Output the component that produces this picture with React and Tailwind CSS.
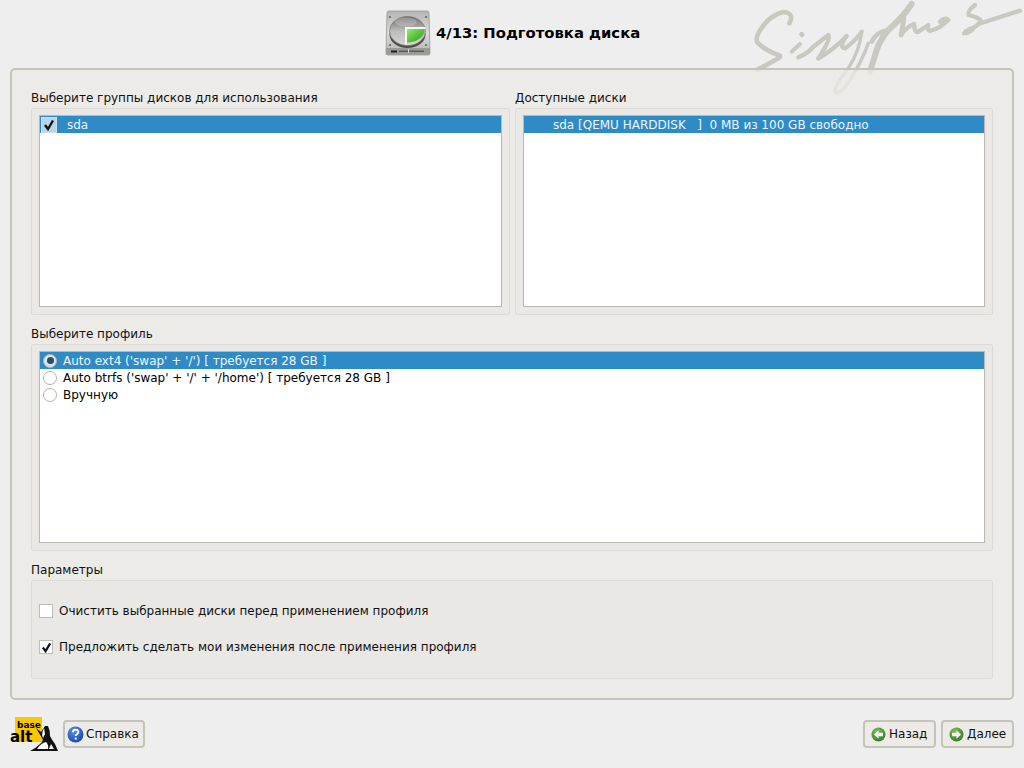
const FONT = { fontFamily: '"DejaVu Sans", sans-serif' };

function DiskIcon() {
  return (
    <svg width="54" height="54" viewBox="0 0 54 54" className="shrink-0">
      <defs>
        <linearGradient id="body" x1="0" y1="0" x2="0" y2="1">
          <stop offset="0" stopColor="#b4b4b2" />
          <stop offset="0.5" stopColor="#dadad8" />
          <stop offset="1" stopColor="#b2b2b0" />
        </linearGradient>
        <linearGradient id="platter" x1="0" y1="0" x2="0" y2="1">
          <stop offset="0" stopColor="#6c6c6e" />
          <stop offset="0.5" stopColor="#bcbcba" />
          <stop offset="1" stopColor="#d6d6d4" />
        </linearGradient>
        <linearGradient id="wedge" x1="0" y1="0" x2="1" y2="1">
          <stop offset="0" stopColor="#8cf066" />
          <stop offset="1" stopColor="#279518" />
        </linearGradient>
      </defs>
      <path d="M7 7 Q7 5 9 5 H47 Q49 5 49 7 L50 47 Q50 49 48 49 H8 Q6 49 6 47 Z" fill="url(#body)" stroke="#8c8c8a" strokeWidth="0.700" />
      <rect x="6" y="42" width="44" height="6.500" rx="1" fill="#9a9a98" />
      <rect x="11" y="44.500" width="6" height="2" fill="#202020" />
      <rect x="19" y="44.500" width="25" height="1.500" fill="#5b5b59" />
      <rect x="28" y="43" width="1" height="4" fill="#d8d8d6" />
      <ellipse cx="27.500" cy="28.500" rx="18" ry="13.500" fill="#4f4f4d" />
      <ellipse cx="27.500" cy="25" rx="18" ry="14.500" fill="url(#platter)" stroke="#737371" strokeWidth="0.600" />
      <ellipse cx="26" cy="16" rx="11" ry="4.500" fill="#e4e4e2" opacity="0.300" />
      <path d="M25 21 H45.500 V23 H27 V38.500 H25 Z" fill="#f6f6f4" />
      <path d="M27 23 H44.500 A17.500 13 0 0 1 27 36.500 Z" fill="url(#wedge)" />
      <circle cx="10" cy="11" r="1" fill="#5f5f5d" />
      <circle cx="46" cy="11" r="1" fill="#5f5f5d" />
      <circle cx="10" cy="39" r="1" fill="#5f5f5d" />
      <circle cx="46" cy="39" r="1" fill="#5f5f5d" />
    </svg>
  );
}

function Signature() {
  return (
    <svg
      width="284"
      height="100"
      viewBox="0 0 852 300"
      className="absolute right-0 top-0"
      fill="none"
      stroke="#c9c9c1"
      strokeLinecap="round"
      strokeLinejoin="round"
    >
      <path d="M148 70 Q165 40 130 36 Q90 45 62 88 Q42 120 55 130 Q75 150 115 165 Q128 168 110 178 Q80 195 50 210" strokeWidth="14" />
      <path d="M155 155 L180 132" strokeWidth="12" />
      <path d="M175 172 Q205 160 220 140 L265 105 Q275 115 235 175" strokeWidth="13" />
      <path d="M185 103 L186 104" strokeWidth="15" />
      <path d="M235 175 Q280 150 320 108 Q295 140 315 145 Q345 125 365 95" strokeWidth="13" />
      <path d="M365 95 Q360 150 325 205 Q280 262 286 276 Q300 285 330 240 Q365 185 385 130" strokeWidth="10" />
      <path d="M515 12 Q490 50 445 90 Q420 120 410 150 L390 215" strokeWidth="18" />
      <path d="M395 125 Q410 95 445 90" strokeWidth="14" />
      <path d="M492 55 L483 105" strokeWidth="14" />
      <path d="M483 105 Q500 80 522 72 Q524 100 535 95 Q550 85 565 75 Q560 95 572 92 Q600 85 625 60 Q615 50 600 65" strokeWidth="13" />
      <path d="M705 15 Q680 35 686 45 Q725 55 722 65 Q700 88 672 100" strokeWidth="13" />
      <path d="M680 96 L694 88" strokeWidth="19" />
      <path d="M715 72 L840 32" strokeWidth="13" />
    </svg>
  );
}

function CheckMark({ className }) {
  return (
    <svg viewBox="0 0 12 12" className={className} fill="none" stroke="#10151a" strokeWidth="2.400">
      <path d="M2 6 L5 10 L10 1.500" />
    </svg>
  );
}

function Radio({ checked }) {
  return (
    <span className={`flex h-[14px] w-[14px] shrink-0 items-center justify-center rounded-full border border-[#b4b4ac] ${checked ? "bg-[#d5e5ef]" : "bg-white"}`}>
      {checked && <span className="h-[7px] w-[7px] rounded-full bg-[#33495c]" />}
    </span>
  );
}

function ProfileRow({ selected, checked, children }) {
  return (
    <div className={`flex h-[17px] items-center gap-[6px] pl-[3px] text-[12px] whitespace-pre ${selected ? "bg-[#2e8bc6] text-[#eef5fa]" : "text-black"}`}>
      <Radio checked={checked} />
      {children}
    </div>
  );
}

function Option({ checked, children }) {
  return (
    <div className="flex h-[14px] items-center gap-[6px] text-[12px] text-[#111]">
      <span className="flex h-[14px] w-[14px] shrink-0 items-center justify-center border border-[#bdbdb6] bg-white">
        {checked && <CheckMark className="h-[11px] w-[11px]" />}
      </span>
      {children}
    </div>
  );
}

function ArrowIcon({ dir }) {
  return (
    <svg width="15" height="15" viewBox="0 0 15 15" className="shrink-0">
      <defs>
        <radialGradient id={`g-${dir}`} cx="0.4" cy="0.3" r="0.8">
          <stop offset="0" stopColor="#7fc05c" />
          <stop offset="1" stopColor="#2f7424" />
        </radialGradient>
      </defs>
      <circle cx="7.500" cy="7.500" r="7" fill={`url(#g-${dir})`} />
      {dir === "left" ? (
        <path d="M3 7.500 L7.500 3.200 V5.800 H12 V9.200 H7.500 V11.800 Z" fill="#f4f6ef" />
      ) : (
        <path d="M12 7.500 L7.500 3.200 V5.800 H3 V9.200 H7.500 V11.800 Z" fill="#f4f6ef" />
      )}
    </svg>
  );
}

function HelpIcon() {
  return (
    <svg width="17" height="17" viewBox="0 0 17 17" className="shrink-0">
      <defs>
        <radialGradient id="help" cx="0.4" cy="0.3" r="0.8">
          <stop offset="0" stopColor="#5b93e6" />
          <stop offset="1" stopColor="#1140a8" />
        </radialGradient>
      </defs>
      <circle cx="8.500" cy="8.500" r="8" fill="url(#help)" />
      <path d="M5.800 6.300 Q6 3.700 8.700 3.700 Q11.500 3.800 11.400 6 Q11.300 7.400 9.800 8.200 Q8.800 8.800 8.800 10" fill="none" stroke="#fff" strokeWidth="1.800" />
      <circle cx="8.800" cy="12.600" r="1.200" fill="#fff" />
    </svg>
  );
}

function Logo() {
  return (
    <div className="relative h-[36px] w-[48px] shrink-0">
      <div className="absolute left-[5px] top-[1px] h-[25px] w-[27px] bg-[#f9c800]" />
      <span className="absolute left-[7px] top-[5px] text-[9px] font-bold leading-[9px] text-black">base</span>
      <span className="absolute left-0 top-[15px] text-[15px] font-bold leading-[12px] text-black">alt</span>
      <svg width="54" height="44" viewBox="0 0 54 44" className="absolute left-[-2px] top-[-4px]">
        <path d="M22 39 Q28 36 32 32 Q36 29 34 26 L28 16 L33 20 L37 14 L40 14 Q42 18 42 24 Q44 28 47 32 L50 39 Z" fill="#111" />
        <path d="M29 37 Q33 31 38 30 Q41 33 40 37 Z" fill="#fff" />
        <path d="M43 32 L46 37 H41 Z" fill="#fff" />
        <path d="M36 16 Q33 22 35 26 L37 22 Z" fill="#fff" />
      </svg>
    </div>
  );
}

function NavButton({ children, className }) {
  return (
    <button className={`flex h-[28px] items-center rounded-[4px] border-2 border-[#c4c4b9] bg-[#ecebe7] text-[12px] text-[#111] ${className}`}>
      {children}
    </button>
  );
}

export default function App() {
  return (
    <div className="relative flex h-[768px] w-[1024px] flex-col overflow-hidden bg-[#eeeeee]" style={FONT}>
      <Signature />

      <header className="flex h-[68px] shrink-0 items-center pl-[380px] pb-[2px]">
        <DiskIcon />
        <h1 className="ml-[2px] text-[14.800px] font-bold text-black">4/13: Подготовка диска</h1>
      </header>

      <main className="relative mx-[10px] flex h-[632px] shrink-0 flex-col rounded-[5px] border-2 border-[#c4c4b9] bg-[#ebeae5]/75 px-[19px] pt-[19px] text-[12px] text-[#111]">
        <div className="flex h-[226px] shrink-0 gap-[5px]">
          <section className="flex w-[479px] flex-col">
            <div className="h-[19px] leading-[18px]">Выберите группы дисков для использования</div>
            <div className="flex h-[207px] flex-col rounded-[2px] border border-[#dcdbd6] bg-[#e9e8e4] pb-[7px] pl-[7px] pr-[7px] pt-[6px]">
              <div className="h-full border border-[#b9b9b1] bg-white">
                <div className="flex h-[17px] items-center bg-[#2e8bc6] pl-[1px] text-[#eef5fa]">
                  <span className="flex h-[16px] w-[16px] items-center justify-center border border-[#cfe0ec] bg-[#b9d6e8]">
                    <CheckMark className="h-[12px] w-[12px]" />
                  </span>
                  <span className="ml-[10px] pt-[1px]">sda</span>
                </div>
              </div>
            </div>
          </section>
          <section className="flex w-[478px] flex-col">
            <div className="h-[19px] leading-[18px]">Доступные диски</div>
            <div className="flex h-[207px] flex-col rounded-[2px] border border-[#dcdbd6] bg-[#e9e8e4] pb-[7px] pl-[7px] pr-[7px] pt-[6px]">
              <div className="h-full border border-[#b9b9b1] bg-white">
                <div className="flex h-[17px] items-center whitespace-pre bg-[#2e8bc6] pl-[29px] pt-[1px] text-[#eef5fa]">sda [QEMU HARDDISK   ]  0 MB из 100 GB свободно</div>
              </div>
            </div>
          </section>
        </div>

        <section className="mt-[10px] flex shrink-0 flex-col">
          <div className="h-[19px] leading-[18px]">Выберите профиль</div>
          <div className="h-[207px] rounded-[2px] border border-[#dcdbd6] bg-[#e9e8e4] pb-[7px] pl-[7px] pr-[7px] pt-[6px]">
            <div className="h-full border border-[#b9b9b1] bg-white">
              <ProfileRow selected checked>Auto ext4 ('swap' + '/') [ требуется 28 GB ]</ProfileRow>
              <ProfileRow>Auto btrfs ('swap' + '/' + '/home') [ требуется 28 GB ]</ProfileRow>
              <ProfileRow>Вручную</ProfileRow>
            </div>
          </div>
        </section>

        <section className="mt-[10px] flex shrink-0 flex-col">
          <div className="h-[19px] leading-[18px]">Параметры</div>
          <div className="flex h-[99px] flex-col gap-[22px] rounded-[2px] border border-[#dcdbd6] bg-[#e9e8e4] pl-[7px] pt-[23px]">
            <Option>Очистить выбранные диски перед применением профиля</Option>
            <Option checked>Предложить сделать мои изменения после применения профиля</Option>
          </div>
        </section>
      </main>

      <footer className="flex flex-1 items-start pl-[10px] pr-[10px] pt-[16px]">
        <Logo />
        <NavButton className="ml-[5px] mt-[4px] w-[82px] gap-[2px] pl-[2px]">
          <HelpIcon />
          Справка
        </NavButton>
        <NavButton className="ml-auto mt-[4px] w-[73px] gap-[3px] pl-[6px]">
          <ArrowIcon dir="left" />
          Назад
        </NavButton>
        <NavButton className="ml-[5px] mt-[4px] w-[73px] gap-[3px] pl-[6px]">
          <ArrowIcon dir="right" />
          Далее
        </NavButton>
      </footer>
    </div>
  );
}
